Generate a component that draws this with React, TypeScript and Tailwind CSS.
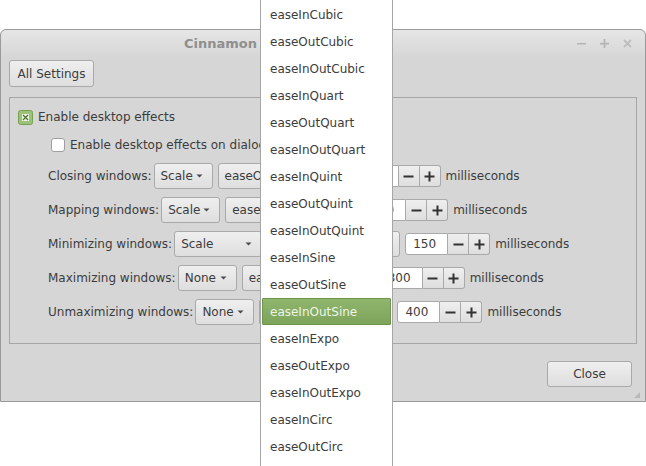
import React from "react";

const items = [
  "easeInCubic",
  "easeOutCubic",
  "easeInOutCubic",
  "easeInQuart",
  "easeOutQuart",
  "easeInOutQuart",
  "easeInQuint",
  "easeOutQuint",
  "easeInOutQuint",
  "easeInSine",
  "easeOutSine",
  "easeInOutSine",
  "easeInExpo",
  "easeOutExpo",
  "easeInOutExpo",
  "easeInCirc",
  "easeOutCirc",
];

function Arrow() {
  return (
    <svg width="7" height="4" viewBox="0 0 7 4" className="shrink-0">
      <path d="M0.5 0.5 L6.5 0.5 L3.5 3.5 Z" fill="#4a4a4a" />
    </svg>
  );
}

function Combo({ text, w, arrow = true }: { text: string; w: string; arrow?: boolean }) {
  return (
    <div
      className={`${w} h-[26px] shrink-0 flex items-center justify-between pl-[6px] pr-[9px] rounded-[3px] border border-[#a9a9a9] bg-linear-to-b from-[#efefef] to-[#dedede] text-[#3c3c3c] overflow-hidden whitespace-nowrap`}
    >
      <span>{text}</span>
      {arrow && <Arrow />}
    </div>
  );
}

function Spin({ value }: { value: string }) {
  return (
    <div className="h-[22px] flex shrink-0">
      <div className="w-[43px] h-full bg-white border border-[#a9a9a9] rounded-l-[3px] flex items-center pl-[7px] text-[#3c3c3c]">
        {value}
      </div>
      <div className="w-[21px] h-full border-y border-r border-[#a9a9a9] bg-linear-to-b from-[#efefef] to-[#dedede] flex items-center justify-center">
        <svg width="11" height="11" viewBox="0 0 11 11">
          <rect x="0.5" y="4.5" width="10" height="2" fill="#333" />
        </svg>
      </div>
      <div className="w-[21px] h-full border-y border-r border-[#a9a9a9] rounded-r-[3px] bg-linear-to-b from-[#efefef] to-[#dedede] flex items-center justify-center">
        <svg width="11" height="11" viewBox="0 0 11 11">
          <rect x="0.5" y="4.5" width="10" height="2" fill="#333" />
          <rect x="4.5" y="0.5" width="2" height="10" fill="#333" />
        </svg>
      </div>
    </div>
  );
}

function Row({
  label,
  c1,
  c1w,
  c2,
  value,
}: {
  label: string;
  c1: string;
  c1w: string;
  c2: string;
  value: string;
}) {
  return (
    <div className="h-[26px] flex items-center gap-[5px] whitespace-nowrap">
      <span className="text-[#3c3c3c] -mr-[3px]">{label}</span>
      <Combo text={c1} w={c1w} />
      <Combo text={c2} w="w-[133px]" />
      <Spin value={value} />
      <span className="text-[#3c3c3c]">milliseconds</span>
    </div>
  );
}

export default function App() {
  return (
    <div className="relative w-[646px] h-[466px] bg-white overflow-hidden font-['DejaVu_Sans',sans-serif] text-[12px]">
      <div className="mt-[29px] w-[646px] h-[373px] border border-[#9a9a9a] rounded-t-[6px] bg-[#d6d6d6] flex flex-col">
        {/* title bar */}
        <div className="h-[28px] shrink-0 rounded-t-[6px] bg-linear-to-b from-[#e6e6e6] to-[#d6d6d6] flex items-center relative">
          <span className="pl-[183px] font-bold text-[13px] text-[#8f8f8f]">Cinnamon</span>
          <div className="absolute right-[12px] top-[8px] flex gap-[12px]">
            <svg width="11" height="11" viewBox="0 0 11 11">
              <rect x="1" y="5" width="9" height="1.5" fill="#b4b4b4" />
            </svg>
            <svg width="11" height="11" viewBox="0 0 11 11">
              <rect x="1" y="4.8" width="9" height="1.8" fill="#b4b4b4" />
              <rect x="4.6" y="1" width="1.8" height="9" fill="#b4b4b4" />
            </svg>
            <svg width="11" height="11" viewBox="0 0 11 11">
              <path d="M2 2 L9 9 M9 2 L2 9" stroke="#bdbdbd" strokeWidth="1.8" />
            </svg>
          </div>
        </div>
        {/* body */}
        <div className="flex-1 flex flex-col px-[8px] pt-[2px]">
          <div className="flex">
            <div className="h-[27px] w-[85px] rounded-[3px] border border-[#a9a9a9] bg-linear-to-b from-[#efefef] to-[#dedede] flex items-center justify-center text-[#3c3c3c]">
              All Settings
            </div>
          </div>
          <div className="mt-[10px] h-[247px] border border-[#a6a6a6] flex flex-col pt-[10px] pl-[8px]">
            <div className="h-[18px] flex items-center gap-[5px]">
              <svg width="15" height="15" viewBox="0 0 15 15">
                <rect x="0.5" y="0.5" width="14" height="14" rx="2" fill="#9cc27a" stroke="#77a153" />
                <rect x="4" y="4" width="7" height="7" fill="#eef5e6" />
                <path d="M5 5 L10 10 M10 5 L5 10" stroke="#4d7330" strokeWidth="1.3" />
              </svg>
              <span className="text-[#3c3c3c]">Enable desktop effects</span>
            </div>
            <div className="mt-[10px] h-[18px] flex items-center gap-[5px] pl-[33px]">
              <div className="w-[14px] h-[14px] rounded-[3px] border border-[#9f9f9f] bg-white" />
              <span className="text-[#3c3c3c] whitespace-nowrap">Enable desktop effects on dialog boxes</span>
            </div>
            <div className="mt-[9px] pl-[30px] flex flex-col gap-[8px]">
              <Row label="Closing windows:" c1="Scale" c1w="w-[59px]" c2="easeOutQuad" value="150" />
              <Row label="Mapping windows:" c1="Scale" c1w="w-[59px]" c2="easeOutQuad" value="150" />
              <Row label="Minimizing windows:" c1="Scale" c1w="w-[88px]" c2="easeInQuad" value="150" />
              <Row label="Maximizing windows:" c1="None" c1w="w-[59px]" c2="easeInExpo" value="300" />
              <Row label="Unmaximizing windows:" c1="None" c1w="w-[59px]" c2="easeInOutSine" value="400" />
            </div>
          </div>
          <div className="flex justify-end mt-[17px] pr-[5px]">
            <div className="h-[26px] w-[85px] rounded-[3px] border border-[#a9a9a9] bg-linear-to-b from-[#efefef] to-[#dedede] flex items-center justify-center text-[#3c3c3c]">
              Close
            </div>
          </div>
          <div className="flex justify-end mt-[4px] -mr-[4px]">
            <svg width="8" height="8" viewBox="0 0 8 8">
              <path d="M7 1 L7 7 L1 7 Z" fill="#b9b9b9" />
            </svg>
          </div>
        </div>
      </div>

      {/* popup menu */}
      <div className="absolute left-[260px] top-0 w-[133px] h-[466px] bg-white border-x border-[#a6a6a6] pt-[1px] px-[1px]">
        {items.map((it) => {
          const sel = it === "easeInOutSine";
          return (
            <div
              key={it}
              className={
                sel
                  ? "h-[27px] flex items-center pl-[7px] bg-linear-to-b from-[#8fb66c] to-[#7ea45b] border border-[#6e954d] text-[#eef4e8] rounded-[1px]"
                  : "h-[27px] flex items-center pl-[8px] text-[#3c3c3c]"
              }
            >
              {it}
            </div>
          );
        })}
      </div>
    </div>
  );
}
